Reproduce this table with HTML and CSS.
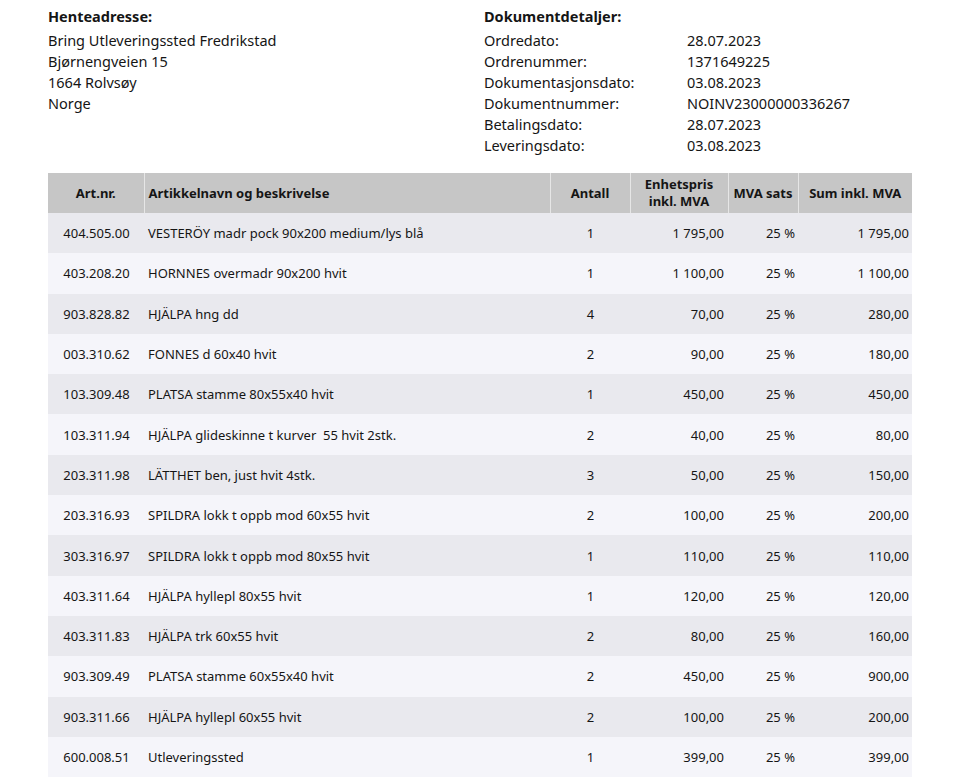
FILE: index.html
```html
<!DOCTYPE html>
<html lang="no">
<head>
<meta charset="utf-8">
<title>Faktura</title>
<link rel="stylesheet" href="styles.css">
</head>
<body>
<div class="page">
  <div class="top">
    <div class="address">
      <div class="title">Henteadresse:</div>
      <div>Bring Utleveringssted Fredrikstad</div>
      <div>Bjørnengveien 15</div>
      <div>1664 Rolvsøy</div>
      <div>Norge</div>
    </div>
    <div class="details">
      <div class="title">Dokumentdetaljer:</div>
      <div class="grid">
        <span>Ordredato:</span><span>28.07.2023</span>
        <span>Ordrenummer:</span><span>1371649225</span>
        <span>Dokumentasjonsdato:</span><span>03.08.2023</span>
        <span>Dokumentnummer:</span><span>NOINV23000000336267</span>
        <span>Betalingsdato:</span><span>28.07.2023</span>
        <span>Leveringsdato:</span><span>03.08.2023</span>
      </div>
    </div>
  </div>
  <table class="items">
    <colgroup>
      <col class="c-art"><col class="c-name"><col class="c-qty"><col class="c-price"><col class="c-vat"><col class="c-sum">
    </colgroup>
    <thead>
      <tr>
        <th class="center">Art.nr.</th>
        <th class="left">Artikkelnavn og beskrivelse</th>
        <th class="center">Antall</th>
        <th class="center">Enhetspris<br>inkl. MVA</th>
        <th class="center">MVA sats</th>
        <th class="center">Sum inkl. MVA</th>
      </tr>
    </thead>
    <tbody>
      <tr><td class="center">404.505.00</td><td>VESTERÖY madr pock 90x200 medium/lys blå</td><td class="center">1</td><td class="right">1 795,00</td><td class="right">25 %</td><td class="right">1 795,00</td></tr>
      <tr><td class="center">403.208.20</td><td>HORNNES overmadr 90x200 hvit</td><td class="center">1</td><td class="right">1 100,00</td><td class="right">25 %</td><td class="right">1 100,00</td></tr>
      <tr><td class="center">903.828.82</td><td>HJÄLPA hng dd</td><td class="center">4</td><td class="right">70,00</td><td class="right">25 %</td><td class="right">280,00</td></tr>
      <tr><td class="center">003.310.62</td><td>FONNES d 60x40 hvit</td><td class="center">2</td><td class="right">90,00</td><td class="right">25 %</td><td class="right">180,00</td></tr>
      <tr><td class="center">103.309.48</td><td>PLATSA stamme 80x55x40 hvit</td><td class="center">1</td><td class="right">450,00</td><td class="right">25 %</td><td class="right">450,00</td></tr>
      <tr><td class="center">103.311.94</td><td>HJÄLPA glideskinne t kurver&nbsp; 55 hvit 2stk.</td><td class="center">2</td><td class="right">40,00</td><td class="right">25 %</td><td class="right">80,00</td></tr>
      <tr><td class="center">203.311.98</td><td>LÄTTHET ben, just hvit 4stk.</td><td class="center">3</td><td class="right">50,00</td><td class="right">25 %</td><td class="right">150,00</td></tr>
      <tr><td class="center">203.316.93</td><td>SPILDRA lokk t oppb mod 60x55 hvit</td><td class="center">2</td><td class="right">100,00</td><td class="right">25 %</td><td class="right">200,00</td></tr>
      <tr><td class="center">303.316.97</td><td>SPILDRA lokk t oppb mod 80x55 hvit</td><td class="center">1</td><td class="right">110,00</td><td class="right">25 %</td><td class="right">110,00</td></tr>
      <tr><td class="center">403.311.64</td><td>HJÄLPA hyllepl 80x55 hvit</td><td class="center">1</td><td class="right">120,00</td><td class="right">25 %</td><td class="right">120,00</td></tr>
      <tr><td class="center">403.311.83</td><td>HJÄLPA trk 60x55 hvit</td><td class="center">2</td><td class="right">80,00</td><td class="right">25 %</td><td class="right">160,00</td></tr>
      <tr><td class="center">903.309.49</td><td>PLATSA stamme 60x55x40 hvit</td><td class="center">2</td><td class="right">450,00</td><td class="right">25 %</td><td class="right">900,00</td></tr>
      <tr><td class="center">903.311.66</td><td>HJÄLPA hyllepl 60x55 hvit</td><td class="center">2</td><td class="right">100,00</td><td class="right">25 %</td><td class="right">200,00</td></tr>
      <tr><td class="center">600.008.51</td><td>Utleveringssted</td><td class="center">1</td><td class="right">399,00</td><td class="right">25 %</td><td class="right">399,00</td></tr>
    </tbody>
  </table>
</div>
</body>
</html>
```
FILE: styles.css
```css
html, body {
  margin: 0;
  padding: 0;
  background: #ffffff;
}
body {
  font-family: "Noto Sans", "Open Sans", sans-serif;
  font-size: 14.5px;
  color: #151515;
}
.page {
  padding: 6px 48px 0 48px;
}
.top {
  display: flex;
  line-height: 21px;
}
.address {
  width: 436px;
}
.title {
  font-weight: 700;
  margin-bottom: 3px;
}
.details .grid {
  display: grid;
  grid-template-columns: 203px auto;
}
.items {
  margin-top: 17px;
  width: 864px;
  border-collapse: collapse;
  table-layout: fixed;
  font-size: 13px;
}
.c-art { width: 96px; }
.c-name { width: 406px; }
.c-qty { width: 80px; }
.c-price { width: 98px; }
.c-vat { width: 70px; }
.c-sum { width: 114px; }
.items th {
  background: #c6c6c6;
  font-weight: 700;
  height: 40px;
  padding: 0 4px;
  line-height: 17px;
  border-left: 1px solid #e6e6e6;
  color: #151515;
}
.items th:first-child {
  border-left: none;
}
.items td {
  height: 40.3px;
  padding: 0 3px 0 4px;
  white-space: nowrap;
}
.items tbody tr:nth-child(odd) td {
  background: #e9e9ee;
}
.items tbody tr:nth-child(even) td {
  background: #f5f5fa;
}
.center { text-align: center; }
.left { text-align: left; }
.right { text-align: right; }
.items td.right:nth-child(4) { padding-right: 4px; }
```
